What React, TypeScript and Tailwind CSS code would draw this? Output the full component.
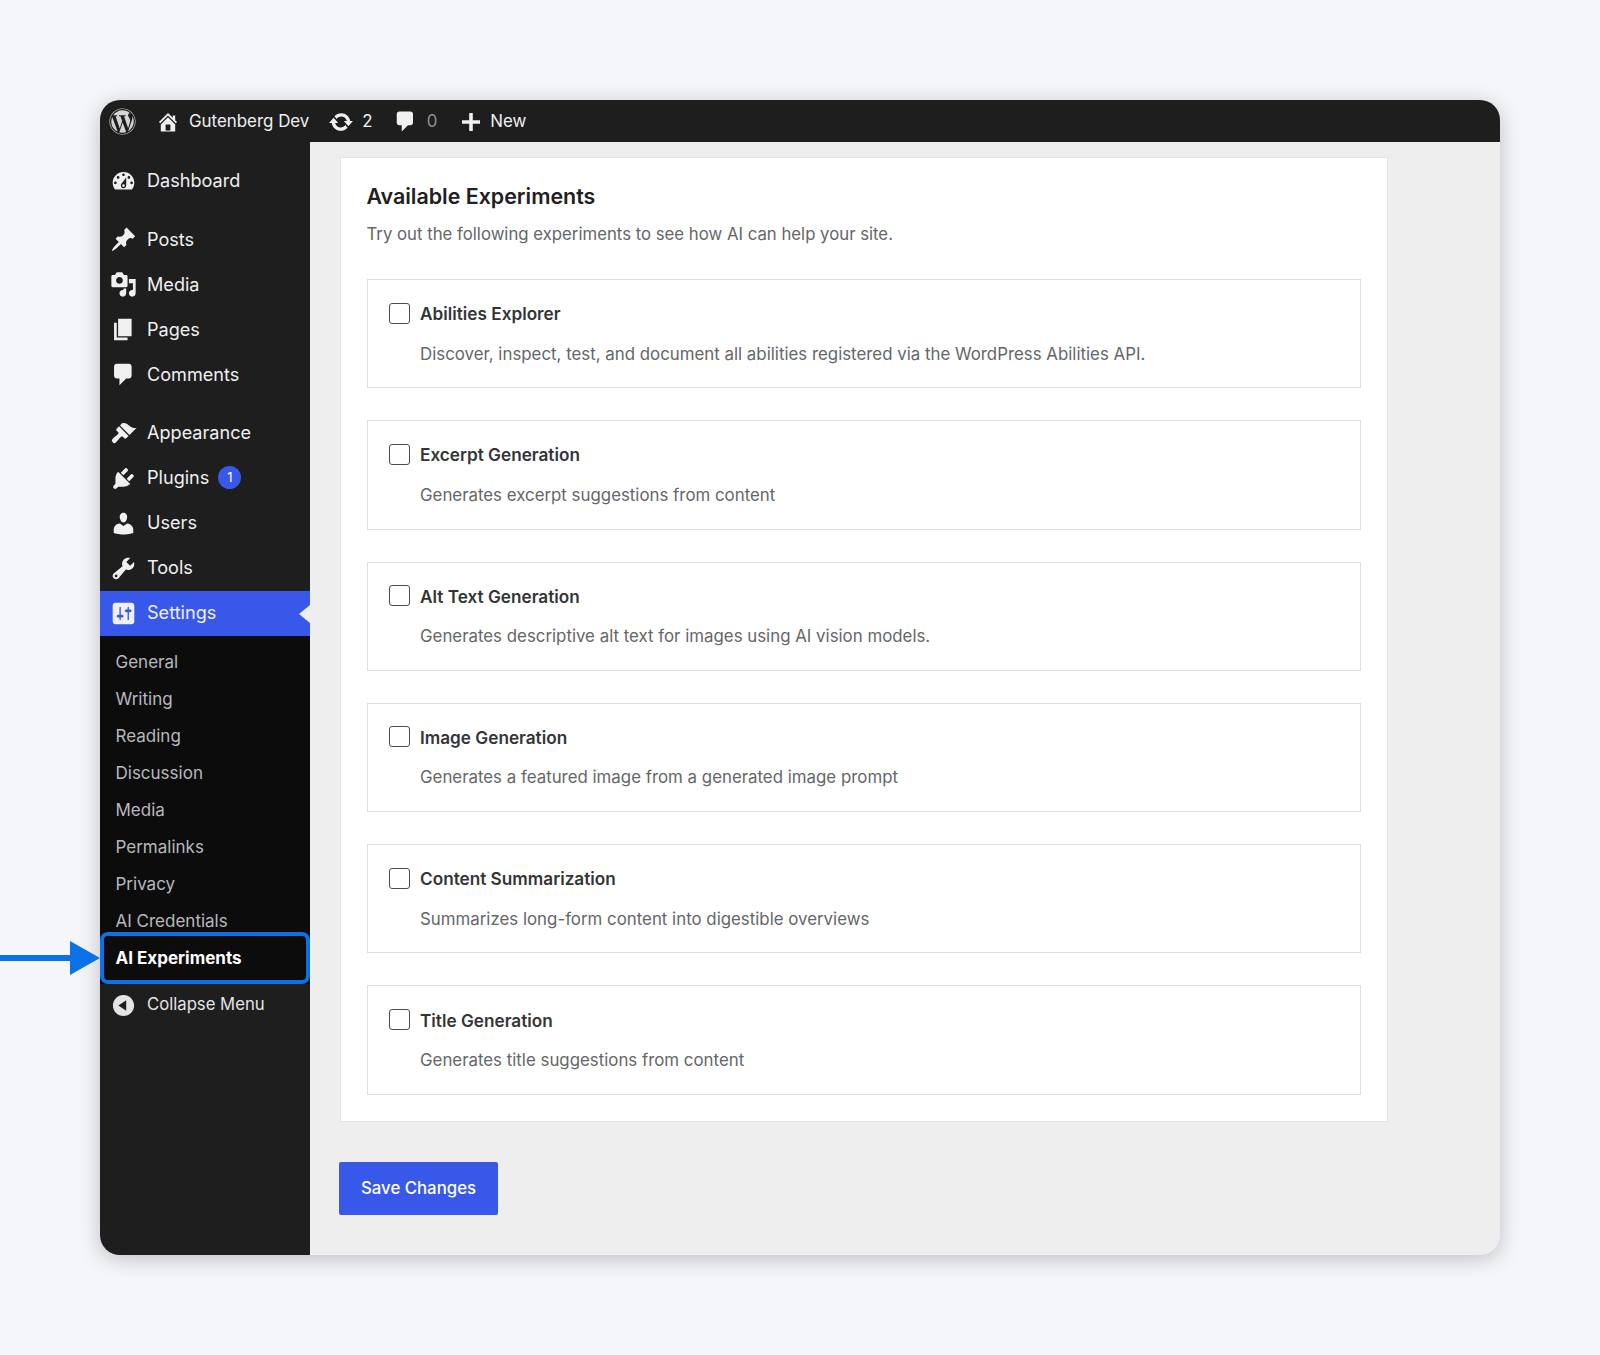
import type { ReactNode } from 'react';
import { FaWordpress } from 'react-icons/fa';

const ICONS: Record<string, string> = {
  home: 'M16 8.5l1.53 1.53-1.06 1.06L10 4.62l-6.47 6.47-1.06-1.06L10 2.5l4 4v-2h2v4zm-6-2.46l6 5.99V18H4v-5.97zM12 17v-5H8v5h4z',
  update: 'M10.2 3.28c3.53 0 6.43 2.61 6.92 6h2.08l-3.5 4-3.5-4h2.32c-.45-1.97-2.21-3.45-4.32-3.45-1.45 0-2.73.71-3.54 1.78L4.95 5.66C6.23 4.2 8.11 3.28 10.2 3.28zm-.4 13.44c-3.52 0-6.43-2.61-6.92-6H.8l3.5-4c1.17 1.33 2.33 2.67 3.5 4H5.48c.45 1.97 2.21 3.45 4.32 3.45 1.45 0 2.73-.71 3.54-1.78l1.71 1.95c-1.28 1.46-3.15 2.38-5.25 2.38z',
  comment: 'M5 2h9c1.1 0 2 .9 2 2v7c0 1.1-.9 2-2 2h-2l-5 5v-5H5c-1.1 0-2-.9-2-2V4c0-1.1.9-2 2-2z',
  plus: 'M17.5 8.5v3h-6v6h-3v-6h-6v-3h6v-6h3v6z',
  dashboard: 'M3.76 16h12.48c1.1-1.37 1.76-3.11 1.76-5 0-4.42-3.58-8-8-8s-8 3.58-8 8c0 1.89.66 3.63 1.76 5zM10 4c.55 0 1 .45 1 1s-.45 1-1 1-1-.45-1-1 .45-1 1-1zM6 6c.55 0 1 .45 1 1s-.45 1-1 1-1-.45-1-1 .45-1 1-1zm8 0c.55 0 1 .45 1 1s-.45 1-1 1-1-.45-1-1 .45-1 1-1zm-5.37 5.55L12 7v6c0 1.1-.9 2-2 2s-2-.9-2-2c0-.57.24-1.08.63-1.45zM4 10c.55 0 1 .45 1 1s-.45 1-1 1-1-.45-1-1 .45-1 1-1zm12 0c.55 0 1 .45 1 1s-.45 1-1 1-1-.45-1-1 .45-1 1-1zm-5 3c0-.55-.45-1-1-1s-1 .45-1 1 .45 1 1 1 1-.45 1-1z',
  post: 'M10.44 3.02l1.82-1.82 6.36 6.35-1.83 1.82c-1.05-.68-2.48-.57-3.41.36l-.75.75c-.92.93-1.04 2.35-.35 3.41l-1.83 1.82-2.41-2.41-2.8 2.79c-.42.42-3.38 2.71-3.8 2.29s1.86-3.39 2.28-3.81l2.79-2.79L4.1 9.36l1.83-1.82c1.05.69 2.48.57 3.4-.36l.75-.75c.93-.92 1.05-2.35.36-3.41z',
  media: 'M13 11V4c0-.55-.45-1-1-1h-1.67L9 1H5L3.67 3H2c-.55 0-1 .45-1 1v7c0 .55.45 1 1 1h10c.55 0 1-.45 1-1zM7 4.5c1.38 0 2.5 1.12 2.5 2.5S8.38 9.5 7 9.5 4.5 8.38 4.5 7 5.62 4.5 7 4.5zM14 6h5v10.5c0 1.38-1.12 2.5-2.5 2.5S14 17.88 14 16.5s1.12-2.5 2.5-2.5c.17 0 .34.02.5.05V9h-3V6zm-4 8.05V13h2v3.5c0 1.38-1.12 2.5-2.5 2.5S7 17.88 7 16.5 8.12 14 9.5 14c.17 0 .34.02.5.05z',
  page: 'M6 15V2h10v13H6zm-1 1h8v2H3V5h2v11z',
  appearance: 'M14.48 11.06L7.41 3.99l1.5-1.5c.5-.56 2.3-.47 3.51.32 1.21.8 1.43 1.28 2.91 2.1 1.18.64 2.45 1.26 4.45.85zM13.77 11.77L6.7 4.7 4.93 6.47c-.39.39-.39 1.02 0 1.41l1.06 1.06c.39.39.39 1.03 0 1.42-.6.6-3.36 2.9-4.02 3.56a1.82 1.82 0 0 0 2.58 2.58c.66-.66 2.96-3.42 3.56-4.02.39-.39 1.03-.39 1.42 0l1.06 1.06c.39.39 1.02.39 1.41 0z',
  plugin: 'M13.11 4.36L9.87 7.6 8 5.73l3.24-3.24c.35-.34 1.05-.2 1.56.32.52.51.66 1.21.31 1.55zm-8 1.77l.91-1.12 9.01 9.01-1.19.84c-.71.71-2.63 1.16-3.82 1.16H6.14L4.9 17.26c-.59.59-1.54.59-2.12 0-.59-.58-.59-1.53 0-2.12l1.24-1.24v-3.88c0-1.13.4-3.19 1.09-3.89zm7.26 3.97l3.24-3.24c.34-.35 1.04-.21 1.55.31.52.51.66 1.21.31 1.55l-3.24 3.25z',
  users: 'M10 9.25c-2.27 0-2.73-3.44-2.73-3.44C7 4.02 7.82 2 9.97 2c2.16 0 2.98 2.02 2.71 3.81 0 0-.41 3.44-2.68 3.44zm0 2.57L12.72 10c2.39 0 4.52 2.33 4.52 4.53v2.49s-3.65 1.13-7.24 1.13c-3.65 0-7.24-1.13-7.24-1.13v-2.49c0-2.25 1.94-4.48 4.47-4.48z',
  tools: 'M16.68 9.77c-1.34 1.34-3.3 1.67-4.95.99l-5.41 6.52c-.99.99-2.59.99-3.58 0s-.99-2.59 0-3.57l6.52-5.42c-.68-1.65-.35-3.61.99-4.95 1.28-1.28 3.12-1.62 4.72-1.06l-2.89 2.89 2.82 2.82 2.86-2.87c.53 1.58.18 3.39-1.08 4.65zM3.81 16.21c.4.39 1.04.39 1.43 0 .4-.4.4-1.04 0-1.43-.39-.4-1.03-.4-1.43 0-.39.39-.39 1.03 0 1.43z',
  settings: 'M18 16V4c0-1.1-.9-2-2-2H4c-1.1 0-2 .9-2 2v12c0 1.1.9 2 2 2h12c1.1 0 2-.9 2-2zM8 11h1c.55 0 1 .45 1 1s-.45 1-1 1H8v1.5c0 .28-.22.5-.5.5s-.5-.22-.5-.5V13H6c-.55 0-1-.45-1-1s.45-1 1-1h1V5.5c0-.28.22-.5.5-.5s.5.22.5.5V11zm5-2h-1c-.55 0-1-.45-1-1s.45-1 1-1h1V5.5c0-.28.22-.5.5-.5s.5.22.5.5V7h1c.55 0 1 .45 1 1s-.45 1-1 1h-1v5.5c0 .28-.22.5-.5.5s-.5-.22-.5-.5V9z',
  collapse: 'M10 2.16c4.33 0 7.84 3.51 7.84 7.84s-3.51 7.84-7.84 7.84S2.16 14.33 2.16 10 5.71 2.16 10 2.16zm2 11.72V6.12L6.18 9.97z',
};

const TOP_GROUPS = [
  [{ label: 'Dashboard', icon: 'dashboard' }],
  [
    { label: 'Posts', icon: 'post' },
    { label: 'Media', icon: 'media' },
    { label: 'Pages', icon: 'page' },
    { label: 'Comments', icon: 'comment' },
  ],
  [
    { label: 'Appearance', icon: 'appearance' },
    { label: 'Plugins', icon: 'plugin', badge: '1' },
    { label: 'Users', icon: 'users' },
    { label: 'Tools', icon: 'tools' },
  ],
];

const SUBMENU = ['General', 'Writing', 'Reading', 'Discussion', 'Media', 'Permalinks', 'Privacy', 'AI Credentials'];

const EXPERIMENTS = [
  { title: 'Abilities Explorer', text: 'Discover, inspect, test, and document all abilities registered via the WordPress Abilities API.' },
  { title: 'Excerpt Generation', text: 'Generates excerpt suggestions from content' },
  { title: 'Alt Text Generation', text: 'Generates descriptive alt text for images using AI vision models.' },
  { title: 'Image Generation', text: 'Generates a featured image from a generated image prompt' },
  { title: 'Content Summarization', text: 'Summarizes long-form content into digestible overviews' },
  { title: 'Title Generation', text: 'Generates title suggestions from content' },
];

function Dashicon({ name, className }: { name: string; className: string }) {
  return (
    <svg viewBox="0 0 20 20" fill="currentColor" className={className}>
      <path d={ICONS[name]} />
    </svg>
  );
}

function MenuItem({ icon, children }: { icon: string; children: ReactNode }) {
  return (
    <div className="flex h-[45px] items-center pl-[10px] text-[18.1px] text-[#f0f0f1]">
      <Dashicon name={icon} className="h-[27px] w-[27px] shrink-0 text-[#f0f0f1]" />
      <div className="ml-[10px] flex items-center">{children}</div>
    </div>
  );
}

function AdminBar() {
  return (
    <div className="flex h-[42px] shrink-0 items-center bg-[#1e1e1e] pt-[1px] text-[16.9px] text-[#f0f0f1]">
      <FaWordpress className="ml-[9px] h-[27px] w-[27px] text-[#d4d4d6]" />
      <Dashicon name="home" className="ml-[20px] h-[24px] w-[24px]" />
      <span className="ml-[9px]">Gutenberg Dev</span>
      <Dashicon name="update" className="ml-[19px] h-[26px] w-[26px]" />
      <span className="ml-[8px]">2</span>
      <Dashicon name="comment" className="ml-[20px] h-[25px] w-[25px]" />
      <span className="ml-[9px] text-[#8c8f94]">0</span>
      <Dashicon name="plus" className="ml-[22px] h-[24px] w-[24px]" />
      <span className="ml-[7px]">New</span>
    </div>
  );
}

function Sidebar() {
  return (
    <div className="w-[210px] shrink-0 bg-[#1e1e1e] pt-[16.5px]">
      <div className="flex flex-col gap-[13.5px]">
        {TOP_GROUPS.map((group, i) => (
          <div key={i}>
            {group.map((item) => (
              <MenuItem key={item.label} icon={item.icon}>
                {item.label}
                {item.badge && (
                  <span className="ml-[9px] flex h-[23px] w-[23px] items-center justify-center rounded-full bg-[#3858e9] text-[13px] text-white">
                    {item.badge}
                  </span>
                )}
              </MenuItem>
            ))}
          </div>
        ))}
      </div>
      <div className="relative bg-[#3858e9]">
        <MenuItem icon="settings">Settings</MenuItem>
        <div className="absolute right-0 top-[14px] h-0 w-0 border-y-[9px] border-r-[11px] border-y-transparent border-r-[#eeeeef]" />
      </div>
      <div className="bg-[#0c0c0c] pb-[6.5px] pt-[9px] text-[17px] text-[#b8b9bc]">
        {SUBMENU.map((label) => (
          <div key={label} className="flex h-[37px] items-center pl-[15.5px]">
            {label}
          </div>
        ))}
        <div className="relative flex h-[37px] items-center pl-[15.5px] font-bold text-white">
          AI Experiments
          <div className="absolute inset-x-0 -top-[9px] -bottom-[6.5px] rounded-[8px] border-[4px] border-[#0a72e6]" />
        </div>
      </div>
      <div className="flex h-[42px] items-center pl-[10px] text-[16.7px] text-[#e4e4e6]">
        <Dashicon name="collapse" className="h-[27px] w-[27px]" />
        <span className="ml-[10px]">Collapse Menu</span>
      </div>
    </div>
  );
}

function ExperimentCard({ title, text }: { title: string; text: string }) {
  return (
    <div className="h-[109.3px] border border-[#e0e0e0] pl-[21px] pt-[22.5px]">
      <div className="flex h-[21px] items-center">
        <span className="h-[21px] w-[21px] rounded-[3px] border-[1.5px] border-[#4d4d4f] bg-white" />
        <span className="ml-[10.5px] pt-[2px] text-[17.2px] font-semibold text-[#333436]">{title}</span>
      </div>
      <p className="ml-[31.5px] mt-[19px] text-[16.85px] leading-[22px] text-[#646669]">{text}</p>
    </div>
  );
}

export default function App() {
  return (
    <div className="relative min-h-[1355px] bg-[#f5f6fa] pl-[100px] pt-[100px] font-['Inter',sans-serif]">
      <svg viewBox="0 0 100 34" className="absolute left-0 top-[941px] h-[34px] w-[100px]" fill="#0a72e6">
        <path d="M0 14h70V0l30 17-30 17V20H0z" />
      </svg>
      <div className="flex h-[1155px] w-[1400px] flex-col overflow-hidden rounded-[20px] bg-[#eeeeef] shadow-[0_4px_22px_rgba(0,0,0,0.22)]">
        <AdminBar />
        <div className="flex flex-1">
          <Sidebar />
          <div className="flex-1 pl-[29.5px] pt-[14.5px]">
            <div className="w-[1048.5px] border border-[#e4e4e4] bg-white px-[26px] pb-[26.5px] pt-[24px]">
              <h2 className="text-[21.4px] font-semibold leading-[28px] text-[#1f2022]">Available Experiments</h2>
              <p className="mt-[12px] text-[16.75px] leading-[24px] text-[#646669]">
                Try out the following experiments to see how AI can help your site.
              </p>
              <div className="mt-[33.5px] flex flex-col gap-[32px]">
                {EXPERIMENTS.map((e) => (
                  <ExperimentCard key={e.title} title={e.title} text={e.text} />
                ))}
              </div>
            </div>
            <button className="ml-[-0.5px] mt-[40px] h-[52.5px] w-[159px] rounded-[2px] bg-[#3858e9] text-[16.8px] font-medium text-white">
              Save Changes
            </button>
          </div>
        </div>
      </div>
    </div>
  );
}
